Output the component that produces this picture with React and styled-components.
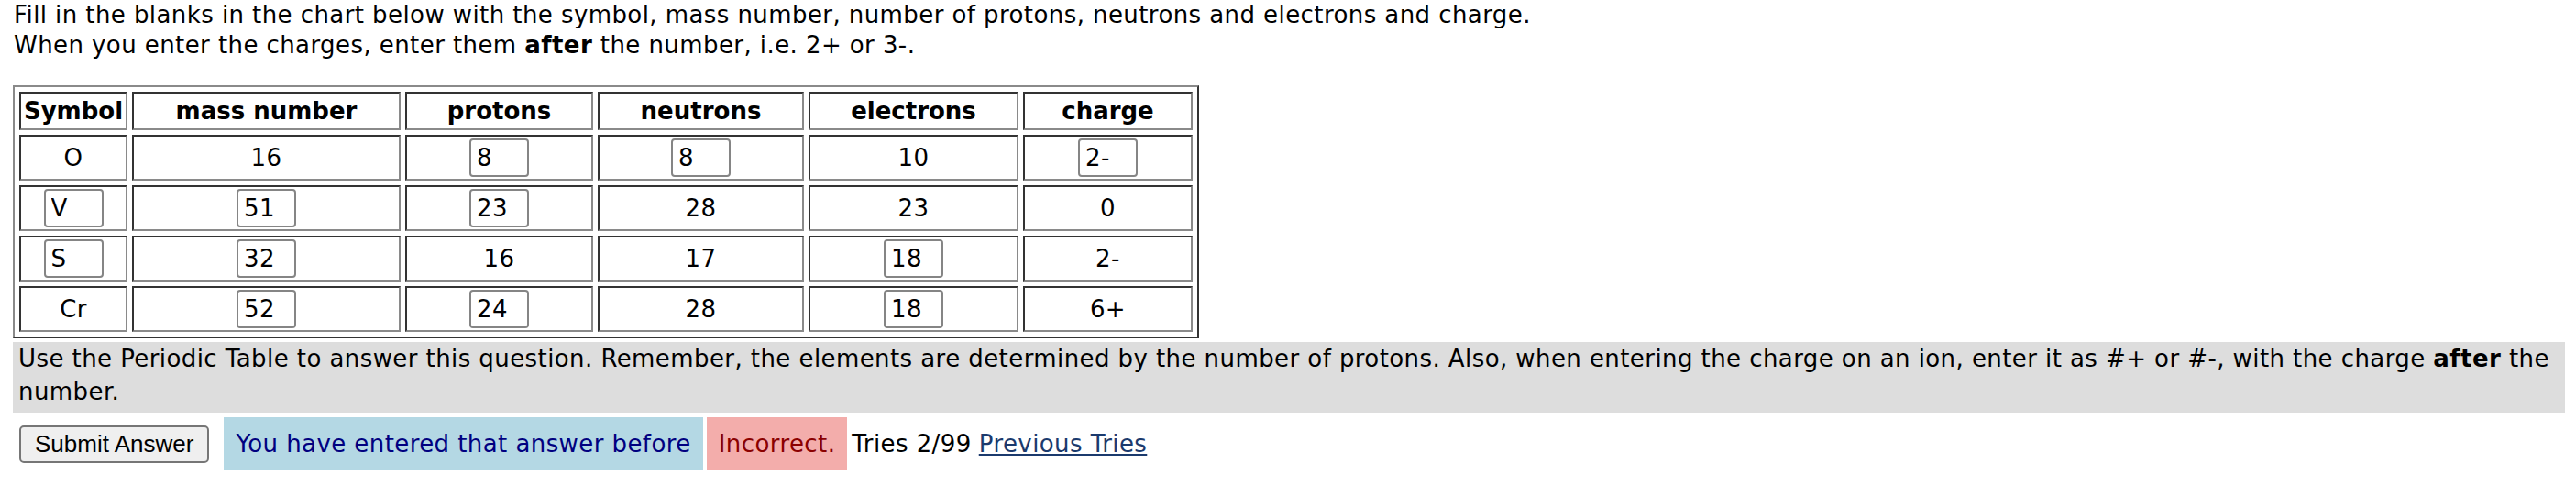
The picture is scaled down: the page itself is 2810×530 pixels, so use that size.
import React from 'react'
import styled, { createGlobalStyle } from 'styled-components'

const GlobalStyle = createGlobalStyle`
  html, body {
    margin: 0;
    padding: 0;
    background: #fff;
  }
  body {
    font-family: "DejaVu Sans", Verdana, sans-serif;
    color: #000;
  }
`

const Page = styled.div`
  padding: 0 12px 0 14px;
  font-size: 26px;
  letter-spacing: 0.42px;
`

const Intro = styled.p`
  margin: 0 0 27px 1px;
  line-height: 33px;
`

const Chart = styled.table`
  border-collapse: separate;
  border-spacing: 5px;
  border: 2px solid;
  border-color: #8a8a8a #333 #333 #8a8a8a;
`

const Cell = styled.td`
  box-sizing: border-box;
  padding: 2px;
  text-align: center;
  vertical-align: middle;
  line-height: 42px;
  border: 2px solid;
  border-color: #333 #8a8a8a #8a8a8a #333;
`

const Head = styled.th`
  box-sizing: border-box;
  width: ${p => p.$w}px;
  padding: 2px;
  line-height: 34px;
  font-weight: bold;
  letter-spacing: 0;
  text-align: center;
  border: 2px solid;
  border-color: #333 #8a8a8a #8a8a8a #333;
`

const Entry = styled.input`
  display: block;
  box-sizing: border-box;
  width: 65px;
  height: 42px;
  margin: 0 auto;
  padding: 0 6px;
  font-family: inherit;
  font-size: 26px;
  letter-spacing: inherit;
  color: #000;
  background: #fff;
  border: 2px solid #858585;
  border-radius: 4px;
`

const Note = styled.div`
  margin-top: 4px;
  padding: 0 6px 5px;
  background: #ddd;
  line-height: 36px;
`

const Status = styled.div`
  display: flex;
  align-items: center;
  margin-top: 5px;
`

const Submit = styled.button`
  box-sizing: border-box;
  height: 41px;
  margin: 0 16px 0 7px;
  padding: 0 15px;
  font-family: "Liberation Sans", Arial, sans-serif;
  font-size: 26px;
  letter-spacing: 0;
  color: #000;
  background: #efefef;
  border: 2px solid #767676;
  border-radius: 5px;
`

const Badge = styled.span`
  height: 58px;
  line-height: 58px;
  padding: 0 13px;
  margin-right: 4px;
  background: ${p => p.$bg};
  color: ${p => p.$fg};
`

const Tries = styled.span`
  margin-left: 1px;
`

const Link = styled.a`
  margin-left: 8px;
  color: #1b3a6d;
  text-decoration: underline;
`

const columns = [
  { label: 'Symbol', w: 118 },
  { label: 'mass number', w: 293 },
  { label: 'protons', w: 205 },
  { label: 'neutrons', w: 225 },
  { label: 'electrons', w: 229 },
  { label: 'charge', w: 185 },
]

// [value, isAnswerBox]
const rows = [
  [['O'], ['16'], ['8', true], ['8', true], ['10'], ['2-', true]],
  [['V', true], ['51', true], ['23', true], ['28'], ['23'], ['0']],
  [['S', true], ['32', true], ['16'], ['17'], ['18', true], ['2-']],
  [['Cr'], ['52', true], ['24', true], ['28'], ['18', true], ['6+']],
]

export default function App() {
  return (
    <Page>
      <GlobalStyle />
      <Intro>
        Fill in the blanks in the chart below with the symbol, mass number, number of protons, neutrons and electrons and charge.
        <br />
        When you enter the charges, enter them <b>after</b> the number, i.e. 2+ or 3-.
      </Intro>
      <Chart>
        <tbody>
          <tr>
            {columns.map(c => (
              <Head key={c.label} $w={c.w}>{c.label}</Head>
            ))}
          </tr>
          {rows.map((r, i) => (
            <tr key={i}>
              {r.map(([val, input], j) => (
                <Cell key={j}>
                  {input ? <Entry type="text" defaultValue={val} /> : val}
                </Cell>
              ))}
            </tr>
          ))}
        </tbody>
      </Chart>
      <Note>
        Use the Periodic Table to answer this question. Remember, the elements are determined by the number of protons. Also, when entering the charge on an ion, enter it as #+ or #-, with the charge <b>after</b> the number.
      </Note>
      <Status>
        <Submit>Submit Answer</Submit>
        <Badge $bg="#b4d8e4" $fg="#000080">You have entered that answer before</Badge>
        <Badge $bg="#f3adab" $fg="#8b0000">Incorrect.</Badge>
        <Tries>Tries 2/99</Tries>
        <Link href="#">Previous Tries</Link>
      </Status>
    </Page>
  )
}
